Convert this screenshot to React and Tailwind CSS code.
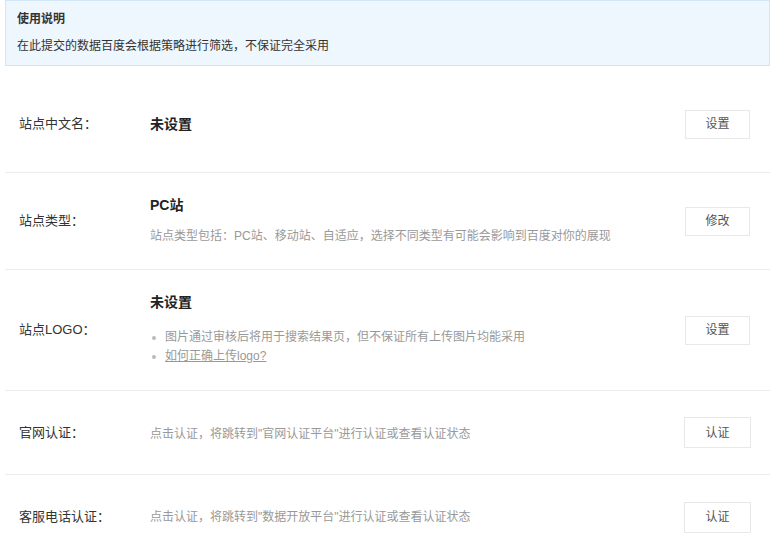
import React from "react";

const font = { fontFamily: '"Liberation Sans", "Noto Sans CJK SC", sans-serif' };

function Btn({ children, wide }) {
  return (
    <div
      className={
        wide
          ? "flex h-[31px] w-[67px] items-center justify-center border border-[#e8e8e8] bg-white text-[12px] text-[#555]"
          : "flex h-[29px] w-[65px] items-center justify-center border border-[#e8e8e8] bg-white text-[12px] text-[#555]"
      }
    >
      {children}
    </div>
  );
}

function Row({ h, label, children, btn, wide, last }) {
  return (
    <div
      className={
        "flex items-center " + (last ? "" : "border-b border-[#ececec] ") + h
      }
    >
      <div className="w-[145px] shrink-0 pl-[14px] text-[13px] text-[#333]">{label}</div>
      <div className="flex-1">{children}</div>
      <div className={wide ? "pr-[19px]" : "pr-[20px]"}>
        <Btn wide={wide}>{btn}</Btn>
      </div>
    </div>
  );
}

export default function App() {
  return (
    <div className="h-[549px] w-[770px] overflow-hidden bg-white" style={font}>
      <div className="ml-[5px] h-[66px] border border-[#d3e6f6] bg-[#eef6fe] pl-[11px] pt-[9px]">
        <div className="text-[12px] font-bold leading-[18px] text-[#333]">使用说明</div>
        <div className="mt-[9px] text-[12px] leading-[18px] text-[#333]">
          在此提交的数据百度会根据策略进行筛选，不保证完全采用
        </div>
      </div>
      <div className="mt-[10px] pl-[5px]">
        <Row h="h-[97px]" label="站点中文名：" btn="设置">
          <div className="text-[14px] font-bold text-[#222]">未设置</div>
        </Row>
        <Row h="h-[97px]" label="站点类型：" btn="修改">
          <div className="mt-[-2px] text-[14px] font-bold leading-[20px] text-[#222]">PC站</div>
          <div className="mt-[11px] text-[12px] leading-[20px] text-[#999]">
            站点类型包括：PC站、移动站、自适应，选择不同类型有可能会影响到百度对你的展现
          </div>
        </Row>
        <Row h="h-[121px]" label="站点LOGO：" btn="设置">
          <div className="mt-[-2px] text-[14px] font-bold leading-[20px] text-[#222]">未设置</div>
          <div className="mt-[16px] flex items-center text-[12px] leading-[19px] text-[#999]">
            <span className="ml-[2px] mr-[9px] inline-block h-[4px] w-[4px] rounded-full bg-[#bbb]"></span>
            图片通过审核后将用于搜索结果页，但不保证所有上传图片均能采用
          </div>
          <div className="flex items-center text-[12px] leading-[19px] text-[#999]">
            <span className="ml-[2px] mr-[9px] inline-block h-[4px] w-[4px] rounded-full bg-[#bbb]"></span>
            <span className="underline">如何正确上传logo?</span>
          </div>
        </Row>
        <Row h="h-[84px]" label="官网认证：" btn="认证" wide>
          <div className="pt-[2px] text-[12px] text-[#999]">点击认证，将跳转到"官网认证平台"进行认证或查看认证状态</div>
        </Row>
        <Row h="h-[84px]" label="客服电话认证：" btn="认证" wide last>
          <div className="text-[12px] text-[#999]">点击认证，将跳转到"数据开放平台"进行认证或查看认证状态</div>
        </Row>
      </div>
    </div>
  );
}
